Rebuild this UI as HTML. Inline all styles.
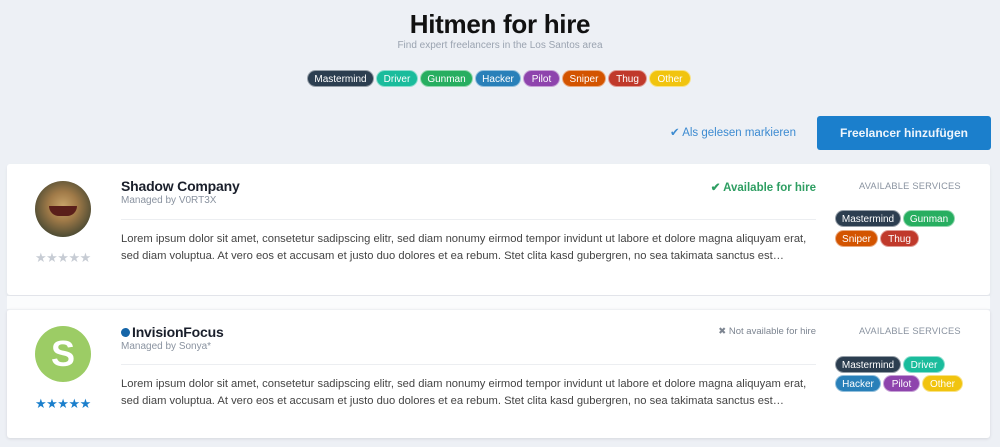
<!DOCTYPE html>
<html><head><meta charset="utf-8"><style>
*{margin:0;padding:0;box-sizing:border-box}
body{width:1000px;height:447px;background:#edf0f5;font-family:"Liberation Sans",sans-serif;position:relative;overflow:hidden;color:#222}
.a{position:absolute}
h1{position:absolute;top:9px;left:0;width:1000px;text-align:center;font-size:26px;font-weight:bold;color:#111;letter-spacing:-0.3px}
.sub{top:40px;left:0;width:1000px;text-align:center;font-size:10px;color:#9aa3b0}
.pill{position:absolute;height:17px;border-radius:9px;color:#fff;font-size:10px;line-height:17px;text-align:center;border:1px solid rgba(255,255,255,.5)}
.mm{background:#2c3e50}.dr{background:#1abc9c}.gu{background:#27ae60}.ha{background:#2980b9}.pi{background:#8e44ad}.sn{background:#d35400}.th{background:#c0392b}.ot{background:#f1c40f;color:#fff}
.btn{left:817px;top:116px;width:174px;height:34px;background:#1b7fcc;border-radius:3px;color:#eef5fc;font-size:12px;font-weight:bold;text-align:center;line-height:34px}
.mark{left:670px;top:125px;font-size:11.5px;color:#3d8bd1}
.card{left:7px;width:983px;background:#fff;border-radius:3px}
.title{font-size:14px;font-weight:bold;color:#1a1f2b;letter-spacing:-0.2px}
.mgr{font-size:10px;color:#8a93a0}
.hr{height:1px;background:#eceef1;left:121px;width:695px}
.txt{left:121px;width:700px;font-size:11.2px;line-height:17px;color:#444}
.svc{left:859px;font-size:9.3px;color:#8a93a0;letter-spacing:.2px}
.star{font-size:13px;letter-spacing:-0.5px}
</style></head><body>
<h1>Hitmen for hire</h1>
<div class="a sub">Find expert freelancers in the Los Santos area</div>
<div class="pill mm" style="left:307px;top:70px;width:67px">Mastermind</div>
<div class="pill dr" style="left:376px;top:70px;width:42px">Driver</div>
<div class="pill gu" style="left:420px;top:70px;width:53px">Gunman</div>
<div class="pill ha" style="left:475px;top:70px;width:46px">Hacker</div>
<div class="pill pi" style="left:523px;top:70px;width:37px">Pilot</div>
<div class="pill sn" style="left:562px;top:70px;width:44px">Sniper</div>
<div class="pill th" style="left:608px;top:70px;width:39px">Thug</div>
<div class="pill ot" style="left:649px;top:70px;width:42px">Other</div>
<div class="a mark">✔ Als gelesen markieren</div>
<div class="a btn">Freelancer hinzufügen</div>

<div class="a card" style="top:164px;height:131px;box-shadow:0 2px 3px rgba(0,0,0,.06)"></div>
<div class="a" style="left:7px;top:296px;width:983px;height:13px;background:#fbfcfd"></div>
<div class="a card" style="top:309px;height:129px;border-top:1px solid #eef0f3;box-shadow:0 1px 3px rgba(0,0,0,.1)"></div>

<!-- card 1 -->
<div class="a" style="left:35px;top:181px;width:56px;height:56px;border-radius:50%;background:radial-gradient(circle at 50% 45%,#c9a46a 0,#a07a48 35%,#4b4a33 75%,#2c2e22 100%)"></div>
<div class="a" style="left:49px;top:206px;width:28px;height:10px;border-radius:0 0 14px 14px;background:#5a1f1a"></div>
<div class="a star" style="left:35px;top:250px;color:#c7ccd4">★★★★★</div>
<div class="a title" style="left:121px;top:178px">Shadow Company</div>
<div class="a mgr" style="left:121px;top:195px">Managed by V0RT3X</div>
<div class="a" style="left:616px;width:200px;text-align:right;top:180px;font-size:11.5px;font-weight:bold;color:#2e9e62">✔ Available for hire</div>
<div class="a hr" style="top:219px"></div>
<div class="a txt" style="top:231px">Lorem ipsum dolor sit amet, consetetur sadipscing elitr, sed diam nonumy eirmod tempor invidunt ut labore et dolore magna aliquyam erat, sed diam voluptua. At vero eos et accusam et justo duo dolores et ea rebum. Stet clita kasd gubergren, no sea takimata sanctus est…</div>
<div class="a svc" style="top:181px">AVAILABLE SERVICES</div>
<div class="pill mm" style="left:835px;top:210px;width:66px">Mastermind</div>
<div class="pill gu" style="left:903px;top:210px;width:52px">Gunman</div>
<div class="pill sn" style="left:835px;top:230px;width:43px">Sniper</div>
<div class="pill th" style="left:880px;top:230px;width:39px">Thug</div>

<!-- card 2 -->
<div class="a" style="left:35px;top:326px;width:56px;height:56px;border-radius:50%;background:#9ccc65;color:#fff;font-size:36px;font-weight:bold;text-align:center;line-height:56px">S</div>
<div class="a star" style="left:35px;top:396px;color:#1b7fcc">★★★★★</div>
<div class="a" style="left:121px;top:328px;width:9px;height:9px;border-radius:50%;background:#1565a8"></div>
<div class="a title" style="left:132px;top:324px">InvisionFocus</div>
<div class="a mgr" style="left:121px;top:341px">Managed by Sonya*</div>
<div class="a" style="left:616px;width:200px;text-align:right;top:326px;font-size:9.5px;color:#7d8591">✖ Not available for hire</div>
<div class="a hr" style="top:364px"></div>
<div class="a txt" style="top:376px">Lorem ipsum dolor sit amet, consetetur sadipscing elitr, sed diam nonumy eirmod tempor invidunt ut labore et dolore magna aliquyam erat, sed diam voluptua. At vero eos et accusam et justo duo dolores et ea rebum. Stet clita kasd gubergren, no sea takimata sanctus est…</div>
<div class="a svc" style="top:326px">AVAILABLE SERVICES</div>
<div class="pill mm" style="left:835px;top:356px;width:66px">Mastermind</div>
<div class="pill dr" style="left:903px;top:356px;width:42px">Driver</div>
<div class="pill ha" style="left:835px;top:375px;width:46px">Hacker</div>
<div class="pill pi" style="left:883px;top:375px;width:37px">Pilot</div>
<div class="pill ot" style="left:922px;top:375px;width:41px">Other</div>
</body></html>
